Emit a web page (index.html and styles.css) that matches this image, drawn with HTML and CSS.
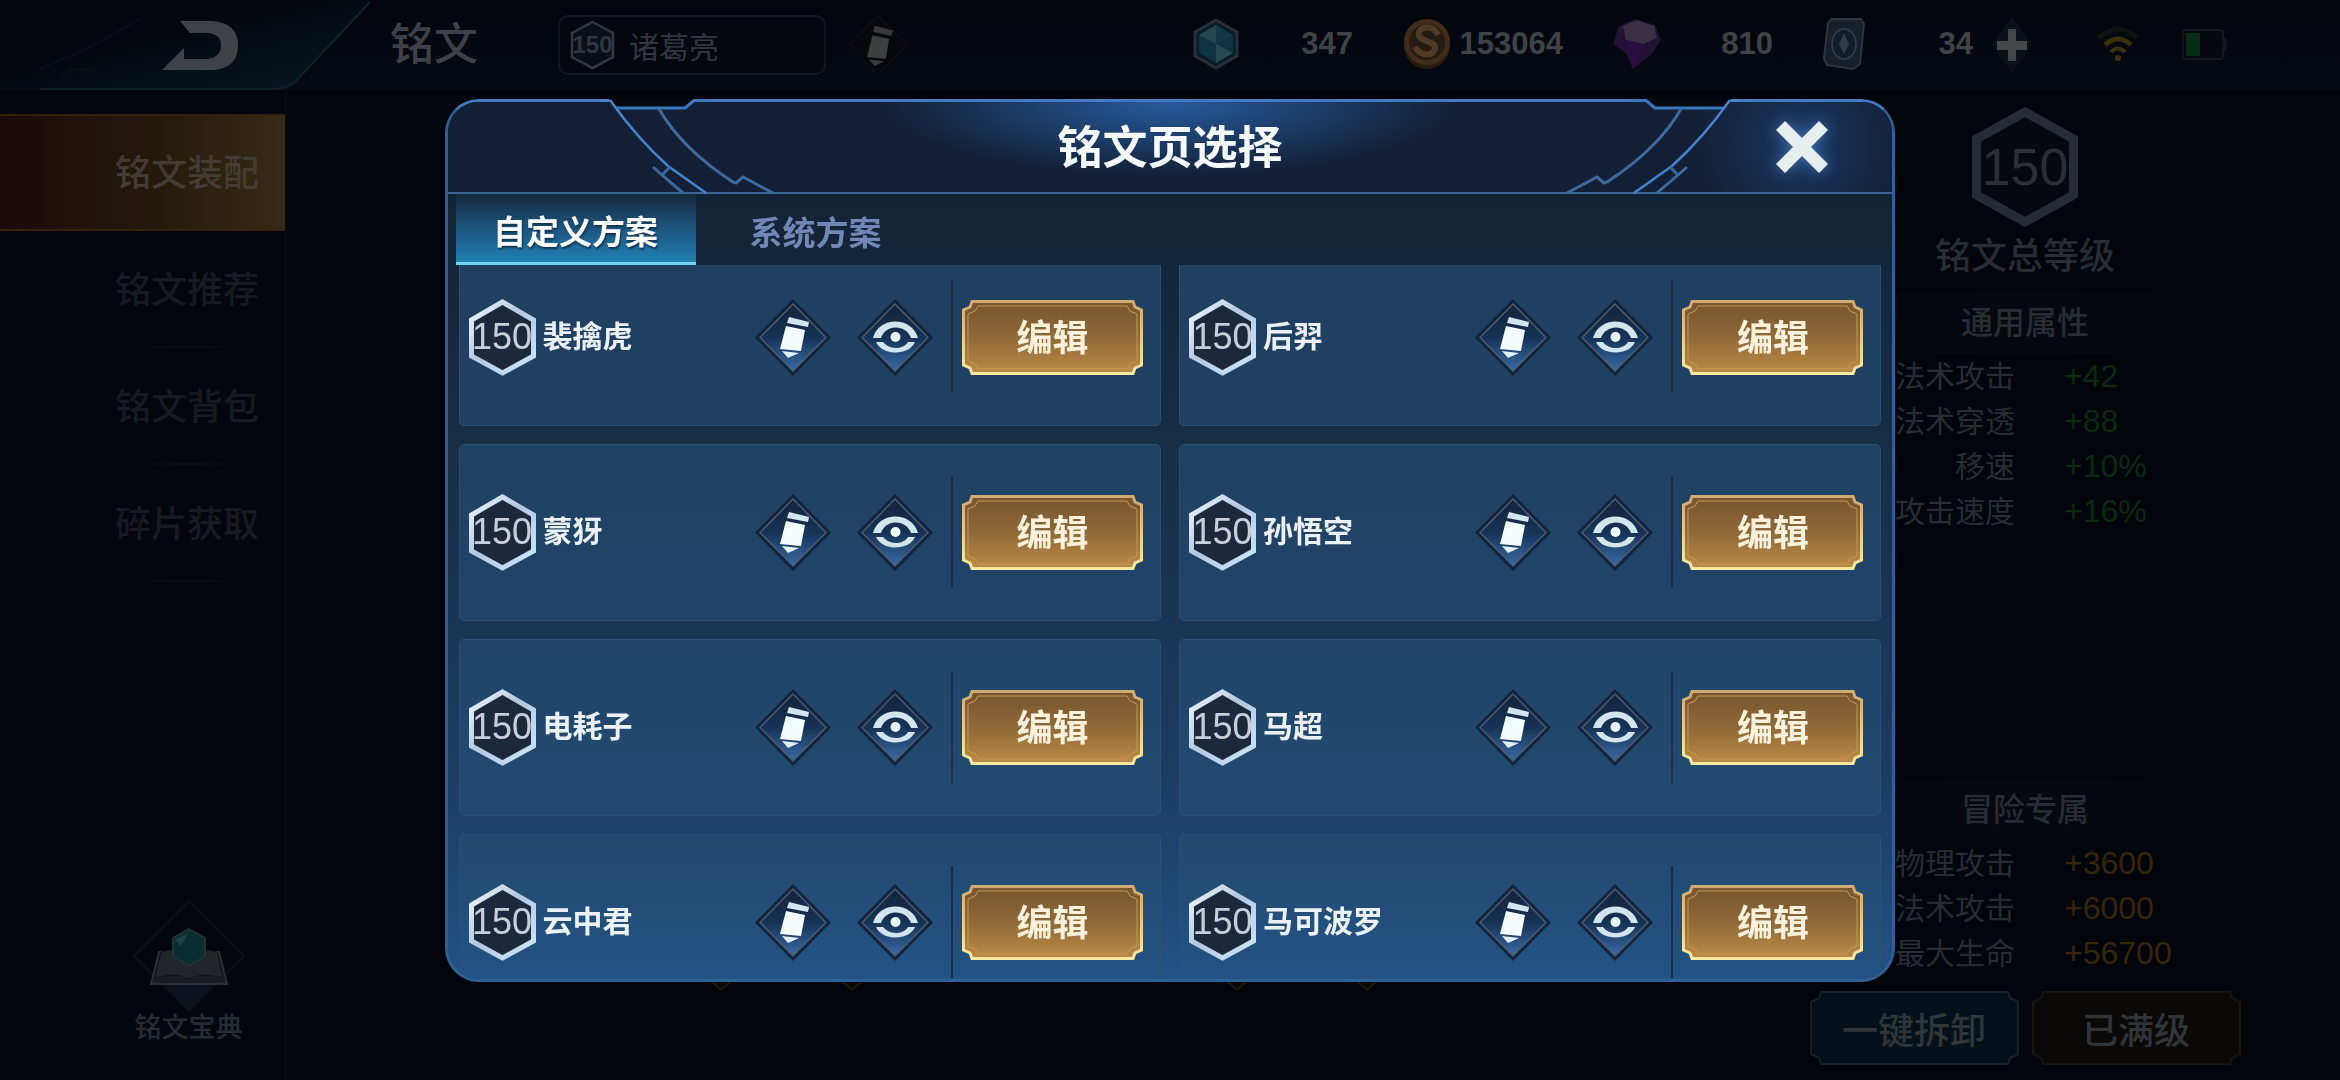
FILE: index.html
```html
<!DOCTYPE html>
<html lang="zh-CN">
<head>
<meta charset="utf-8">
<title>铭文</title>
<link rel="stylesheet" href="styles.css">
</head>
<body>
<svg class="defs" width="0" height="0" aria-hidden="true">
  <defs>
    <linearGradient id="gold" x1="0" y1="0" x2="0" y2="1"><stop offset="0" stop-color="#76542f"/><stop offset=".5" stop-color="#8f6937"/><stop offset="1" stop-color="#bd8b45"/></linearGradient>
    <linearGradient id="goldRim" x1="0" y1="0" x2="0" y2="1"><stop offset="0" stop-color="#d0aa70"/><stop offset="1" stop-color="#fbe9a2"/></linearGradient>
    <linearGradient id="silver" x1="0" y1="0" x2="1" y2="1"><stop offset="0" stop-color="#f2f8ff"/><stop offset=".45" stop-color="#b4c7e0"/><stop offset="1" stop-color="#cbe8ff"/></linearGradient>
    <linearGradient id="gem" x1="0" y1="0" x2="0" y2="1"><stop offset="0" stop-color="#13243a"/><stop offset=".5" stop-color="#163256"/><stop offset="1" stop-color="#3a6ba6"/></linearGradient>
    <linearGradient id="backPlate" x1="0" y1="0" x2="1" y2="1"><stop offset=".4" stop-color="#04070d"/><stop offset="1" stop-color="#071a22"/></linearGradient>
    <symbol id="plate" viewBox="0 0 181 75">
      <path d="M10 1.500H171L173 7L179.500 10V65L173 68L171 73.500H10L8 68L1.500 65V10L8 7Z" fill="url(#gold)" stroke="url(#goldRim)" stroke-width="3"/>
      <path d="M16 6H165L168 11L175 14V61L168 64L165 69H16L13 64L6 61V14L13 11Z" fill="none" stroke="#c79a55" stroke-width="1"/>
    </symbol>
    <symbol id="hex" viewBox="0 0 67 77">
      <path d="M33.500 3L64.500 21V57L33.500 74L2.500 57V21Z" fill="#1c293c" stroke="url(#silver)" stroke-width="5"/>
    </symbol>
    <symbol id="pencil" viewBox="0 0 76 77">
      <path d="M38 0L76 38.500L38 77L0 38.500Z" fill="#12233b"/>
      <path d="M38 5L71 38.500L38 72L5 38.500Z" fill="url(#gem)" stroke="#4c5c72" stroke-width="1.500"/>
      <path d="M34 18L54 23L53 28L32 24Z" fill="#d3e6ee"/>
      <path d="M31 27L50 31L46 52L25 50Z" fill="#f4fcff"/>
      <path d="M27 52L44 54L33 59Z" fill="#e4f2fa"/>
    </symbol>
    <symbol id="eye" viewBox="0 0 76 77">
      <path d="M38 0L76 38.500L38 77L0 38.500Z" fill="#12233b"/>
      <path d="M38 5L71 38.500L38 72L5 38.500Z" fill="url(#gem)" stroke="#4c5c72" stroke-width="1.500"/>
      <path d="M16 39C22 17 55 17 61 39H54C49 25 29 25 24 39Z" fill="#d2e4ec"/>
      <path d="M19 43H26C32 51 46 51 51 43H58C52 57 25 57 19 43Z" fill="#d2e4ec"/>
      <circle cx="38.500" cy="38" r="5" fill="#eefaff"/>
    </symbol>
    <symbol id="trim" viewBox="0 0 190 95">
      <path d="M9 0L15 9H85L95 0Z" fill="#05080e"/>
      <path d="M0 1.500H9" stroke="#4b83c9" stroke-width="3"/>
      <path d="M16 9H85L94 1.500H110" fill="none" stroke="#3c76bd" stroke-width="3"/>
      <path d="M10 1Q36 38 68 67L106 94" fill="none" stroke="#4584cc" stroke-width="2.500"/>
      <path d="M59 10Q82 50 133 83L136 84L143 78L173 94" fill="none" stroke="#3e6aa0" stroke-width="3"/>
      <path d="M53 68L62 76L83 94M62 76L70 68" fill="none" stroke="#38699f" stroke-width="3"/>
    </symbol>
    <symbol id="rim" viewBox="0 0 209 74">
      <path d="M11 1H198L200 7L208 11V63L200 67L198 73H11L9 67L1 63V11L9 7Z"/>
    </symbol>
  </defs>
</svg>

<div class="screen">
  <header class="topbar">
    <button class="back" aria-label="返回">
      <svg width="372" height="92" viewBox="0 0 372 92" aria-hidden="true">
        <path d="M0 0H372L296 82Q288 90 272 90H0Z" fill="url(#backPlate)"/>
        <path d="M370 3L296 82Q288 90 272 90H40" fill="none" stroke="#10212a" stroke-width="2"/>
        <path d="M60 78Q78 62 104 78M40 70Q90 50 140 20" fill="none" stroke="#08101a" stroke-width="2"/>
        <path d="M180 22H212Q238 24 238 46Q238 70 212 71H162L184 49V60H208Q221 58 221 46Q221 35 208 34H190Z" fill="#3f4246"/>
      </svg>
    </button>
    <h1>铭文</h1>
    <button class="current">
      <span class="mini">
        <svg width="45" height="50" viewBox="0 0 45 50" aria-hidden="true"><path d="M22.500 2L43 13V37L22.500 48L2 37V13Z" fill="#0a0e16" stroke="#343941" stroke-width="2.500"/></svg>
        <span>150</span>
      </span>
      <span>诸葛亮</span>
    </button>
    <button class="rename" aria-label="改名">
      <svg width="60" height="64" viewBox="0 0 76 77" aria-hidden="true"><path d="M38 1L75 38.500L38 76L1 38.500Z" fill="#06080e" stroke="#0b1018" stroke-width="2"/><path d="M34 14L57 20L55 27L32 22Z" fill="#36383b"/><path d="M31 26L52 31L48 56L24 54Z" fill="#3e3f41"/><path d="M26 57L46 59L34 65Z" fill="#36383b"/></svg>
    </button>
    <ul class="wallet">
      <li>
        <svg width="46" height="52" viewBox="0 0 46 52" aria-hidden="true"><path d="M23 2L44 14V38L23 50L2 38V14Z" fill="#0b1a24" stroke="#25303b" stroke-width="3"/><path d="M23 7L40 17V35L23 45L6 35V17Z" fill="#0e3341"/><path d="M23 7V26L6 17Z" fill="#24474f"/><path d="M23 26L40 35L23 45Z" fill="#274b54"/><path d="M23 7L40 17L23 26Z" fill="#113844"/></svg>
        <span>347</span>
      </li>
      <li>
        <svg width="48" height="52" viewBox="0 0 48 52" aria-hidden="true"><ellipse cx="24" cy="28" rx="23" ry="23" fill="#2a1b10"/><circle cx="24" cy="24" r="23" fill="#402c18"/><circle cx="24" cy="24" r="18" fill="#251b13"/><path d="M35 17C30 5 14 9 16 17C17 24 34 23 32 31C29 39 17 38 12 29" fill="none" stroke="#503c25" stroke-width="6"/></svg>
        <span>153064</span>
      </li>
      <li>
        <svg width="48" height="52" viewBox="0 0 48 52" aria-hidden="true"><path d="M6 8L22 1L42 7L48 22L38 37L20 51L14 36L0 26Z" fill="#231136"/><path d="M10 8L24 2L41 8L44 20L30 26L13 22Z" fill="#3b2f43"/><path d="M13 22L30 26L20 51L14 36Z" fill="#2b0f40"/></svg>
        <span>810</span>
      </li>
      <li class="short">
        <svg width="42" height="52" viewBox="0 0 42 52" aria-hidden="true"><path d="M9 1H38L41 6L37 46L30 51L4 47L1 41L5 5Z" fill="#171f2a" stroke="#2e3640" stroke-width="2"/><ellipse cx="21" cy="26" rx="12" ry="15" fill="#111c28" stroke="#2b3b4a" stroke-width="2"/><path d="M21 15L26 26L21 36L16 26Z" fill="#303c48"/></svg>
        <span>34</span>
      </li>
    </ul>
    <button class="add" aria-label="增加">
      <svg width="42" height="58" viewBox="0 0 42 58" aria-hidden="true"><path d="M21 1L41 29L21 57L1 29Z" fill="#0a1118"/><path d="M17 13H25V25H36V34H25V45H17V34H6V25H17Z" fill="#44474a"/></svg>
    </button>
    <div class="status">
      <svg width="42" height="36" viewBox="0 0 42 36" aria-label="无线网络"><path d="M2 11Q21 -6 40 11" fill="none" stroke="#0e1310" stroke-width="5"/><path d="M8 18Q21 6 34 18" fill="none" stroke="#3c3108" stroke-width="5"/><path d="M14 25Q21 18 28 25" fill="none" stroke="#3c3108" stroke-width="4"/><circle cx="21" cy="31" r="3" fill="#3c3108"/></svg>
      <svg width="45" height="32" viewBox="0 0 45 32" aria-label="电量"><rect x="1" y="1" width="40" height="29" rx="3" fill="#05080d" stroke="#13171d" stroke-width="2"/><rect x="4" y="4" width="14" height="23" fill="#062d15"/><path d="M43 9V22" stroke="#13171d" stroke-width="3"/></svg>
    </div>
  </header>

  <main class="body">
    <nav class="side">
      <a class="on" href="#equip">铭文装配</a>
      <a href="#recommend">铭文推荐</a>
      <a href="#bag">铭文背包</a>
      <a href="#shards">碎片获取</a>
      <button class="codex">
        <svg width="112" height="112" viewBox="0 0 112 112" aria-hidden="true"><path d="M56 1L111 56L56 111L1 56Z" fill="none" stroke="#0c1017" stroke-width="2"/><path d="M32 85H80L56 110Z" fill="#0b131e"/><path d="M26 52H86L94 84H18Z" fill="#191d23" stroke="#2a2f36" stroke-width="2"/><path d="M28 52Q44 46 56 62Q68 46 84 52L90 78Q68 72 56 79Q44 72 22 78Z" fill="#222529" stroke="#10141a"/><path d="M56 29L72 38V56L56 66L40 56V38Z" fill="#0a2e30" stroke="#243237" stroke-width="2"/><path d="M56 32L48 46L42 40Z" fill="#1f3f42"/></svg>
        <span>铭文宝典</span>
      </button>
    </nav>

    <div class="stage">
      <svg width="690" height="100" viewBox="0 0 690 100" aria-hidden="true"><g fill="#080806" stroke="#1b170c" stroke-width="2"><path d="M1 -8L21 10L41 -8"/><path d="M132 -8L152 10L172 -8"/><path d="M517 -8L537 10L557 -8"/><path d="M647 -8L667 10L687 -8"/></g></svg>
    </div>

    <aside class="info">
      <div class="total">
        <svg width="106" height="120" viewBox="0 0 106 120" aria-hidden="true"><path d="M53 5L101.500 32V88L53 115L4.500 88V32Z" fill="#05080e" stroke="#272b33" stroke-width="9"/></svg>
        <span>150</span>
      </div>
      <p class="total-label">铭文总等级</p>
      <section class="group">
        <h2>通用属性</h2>
        <dl>
          <dt>法术攻击</dt><dd>+42</dd>
          <dt>法术穿透</dt><dd>+88</dd>
          <dt>移速</dt><dd>+10%</dd>
          <dt>攻击速度</dt><dd>+16%</dd>
        </dl>
      </section>
      <section class="group adventure">
        <h2>冒险专属</h2>
        <dl>
          <dt>物理攻击</dt><dd>+3600</dd>
          <dt>法术攻击</dt><dd>+6000</dd>
          <dt>最大生命</dt><dd>+56700</dd>
        </dl>
      </section>
      <div class="actions">
        <button class="act teal"><svg aria-hidden="true"><use href="#rim"/></svg><span>一键拆卸</span></button>
        <button class="act brown"><svg aria-hidden="true"><use href="#rim"/></svg><span>已满级</span></button>
      </div>
    </aside>
  </main>
</div>

<div class="overlay">
  <section class="modal" role="dialog" aria-labelledby="pick">
    <svg class="trim left" width="190" height="95" aria-hidden="true"><use href="#trim"/></svg>
    <svg class="trim right" width="190" height="95" aria-hidden="true"><use href="#trim"/></svg>
    <header class="modal-head">
      <h2 id="pick">铭文页选择</h2>
      <button class="close" aria-label="关闭">
        <svg width="54" height="54" viewBox="0 0 54 54" aria-hidden="true"><path d="M10 1L27 18L44 1L53 10L36 27L53 44L44 53L27 36L10 53L1 44L18 27L1 10Z" fill="#e6efed"/></svg>
      </button>
    </header>
    <div class="tabs" role="tablist">
      <button class="tab on" role="tab" aria-selected="true">自定义方案</button>
      <button class="tab" role="tab" aria-selected="false">系统方案</button>
    </div>
    <div class="list">
      <ul class="cards">
        <li class="card">
          <span class="level"><svg aria-hidden="true"><use href="#hex"/></svg><span>150</span></span><span class="name">裴擒虎</span>
          <button class="icon" aria-label="改名"><svg><use href="#pencil"/></svg></button><button class="icon" aria-label="查看"><svg><use href="#eye"/></svg></button>
          <div class="cta"><button class="edit"><svg aria-hidden="true"><use href="#plate"/></svg><span>编辑</span></button></div>
        </li>
        <li class="card">
          <span class="level"><svg aria-hidden="true"><use href="#hex"/></svg><span>150</span></span><span class="name">后羿</span>
          <button class="icon" aria-label="改名"><svg><use href="#pencil"/></svg></button><button class="icon" aria-label="查看"><svg><use href="#eye"/></svg></button>
          <div class="cta"><button class="edit"><svg aria-hidden="true"><use href="#plate"/></svg><span>编辑</span></button></div>
        </li>
        <li class="card">
          <span class="level"><svg aria-hidden="true"><use href="#hex"/></svg><span>150</span></span><span class="name">蒙犽</span>
          <button class="icon" aria-label="改名"><svg><use href="#pencil"/></svg></button><button class="icon" aria-label="查看"><svg><use href="#eye"/></svg></button>
          <div class="cta"><button class="edit"><svg aria-hidden="true"><use href="#plate"/></svg><span>编辑</span></button></div>
        </li>
        <li class="card">
          <span class="level"><svg aria-hidden="true"><use href="#hex"/></svg><span>150</span></span><span class="name">孙悟空</span>
          <button class="icon" aria-label="改名"><svg><use href="#pencil"/></svg></button><button class="icon" aria-label="查看"><svg><use href="#eye"/></svg></button>
          <div class="cta"><button class="edit"><svg aria-hidden="true"><use href="#plate"/></svg><span>编辑</span></button></div>
        </li>
        <li class="card">
          <span class="level"><svg aria-hidden="true"><use href="#hex"/></svg><span>150</span></span><span class="name">电耗子</span>
          <button class="icon" aria-label="改名"><svg><use href="#pencil"/></svg></button><button class="icon" aria-label="查看"><svg><use href="#eye"/></svg></button>
          <div class="cta"><button class="edit"><svg aria-hidden="true"><use href="#plate"/></svg><span>编辑</span></button></div>
        </li>
        <li class="card">
          <span class="level"><svg aria-hidden="true"><use href="#hex"/></svg><span>150</span></span><span class="name">马超</span>
          <button class="icon" aria-label="改名"><svg><use href="#pencil"/></svg></button><button class="icon" aria-label="查看"><svg><use href="#eye"/></svg></button>
          <div class="cta"><button class="edit"><svg aria-hidden="true"><use href="#plate"/></svg><span>编辑</span></button></div>
        </li>
        <li class="card">
          <span class="level"><svg aria-hidden="true"><use href="#hex"/></svg><span>150</span></span><span class="name">云中君</span>
          <button class="icon" aria-label="改名"><svg><use href="#pencil"/></svg></button><button class="icon" aria-label="查看"><svg><use href="#eye"/></svg></button>
          <div class="cta"><button class="edit"><svg aria-hidden="true"><use href="#plate"/></svg><span>编辑</span></button></div>
        </li>
        <li class="card">
          <span class="level"><svg aria-hidden="true"><use href="#hex"/></svg><span>150</span></span><span class="name">马可波罗</span>
          <button class="icon" aria-label="改名"><svg><use href="#pencil"/></svg></button><button class="icon" aria-label="查看"><svg><use href="#eye"/></svg></button>
          <div class="cta"><button class="edit"><svg aria-hidden="true"><use href="#plate"/></svg><span>编辑</span></button></div>
        </li>
      </ul>
    </div>
  </section>
</div>
</body>
</html>
```

FILE: styles.css
```css
* { box-sizing: border-box; margin: 0; padding: 0; }

body {
  background: #02050b;
  color: #282c33;
  font-family: "Liberation Sans", "Noto Sans CJK SC", sans-serif;
  font-size: 30px;
  overflow: hidden;
}

button { background: none; border: 0; color: inherit; font: inherit; cursor: pointer; }
ul { list-style: none; }
a { color: inherit; text-decoration: none; }
svg { display: block; flex: none; }
.defs { position: absolute; }

.screen { display: flex; flex-direction: column; height: 100vh; }

/* top bar */
.topbar {
  display: flex;
  align-items: center;
  height: 92px;
  flex: none;
  padding-right: 113px;
  background: linear-gradient(#02050b, #060a14);
  border-bottom: 2px solid #030508;
}
.topbar h1 { margin-left: 18px; font-size: 44px; line-height: 60px; font-weight: 500; color: #3e4148; }
.current {
  display: flex;
  align-items: center;
  gap: 14px;
  width: 268px;
  height: 60px;
  margin-left: 80px;
  padding-left: 10px;
  border: 2px solid #111721;
  border-radius: 10px;
  background: #04070d;
  color: #32363e;
}
.mini, .level, .total, .act, .edit { display: grid; place-items: center; flex: none; }
.mini > *, .level > *, .total > *, .act > *, .edit > * { grid-area: 1 / 1; }
.mini span { font-size: 24px; font-weight: 700; }
.rename { margin-left: 22px; }
.wallet { display: flex; gap: 50px; margin-left: auto; font-size: 31px; font-weight: 700; color: #404346; }
.wallet li { display: flex; align-items: center; justify-content: space-between; width: 160px; }
.wallet .short { width: 150px; }
.wallet span, .wallet svg { margin-bottom: 3px; }
.add { margin-left: 18px; }
.status { display: flex; align-items: center; gap: 43px; margin-left: 64px; }

/* page body */
.body { display: flex; flex: 1; min-height: 0; }
.side {
  display: flex;
  flex-direction: column;
  width: 287px;
  padding-top: 22px;
  border-right: 2px solid #060b10;
  background: #03070d;
}
.side a {
  height: 117px;
  padding: 2px 26px 0 0;
  font-size: 36px;
  font-weight: 500;
  line-height: 115px;
  text-align: right;
  color: #171b21;
  background: linear-gradient(90deg, transparent, #0a0f15, transparent) 122px 100% / 130px 2px no-repeat;
}
.side a.on {
  padding-top: 0;
  color: #433c35;
  background: linear-gradient(90deg, #190b0a, #241a0b 55%, #362b16);
  border-top: 2px solid #30200c;
  border-bottom: 2px solid #33230d;
}
.codex {
  display: flex;
  flex-direction: column;
  align-items: center;
  margin: auto 0 36px 92px;
  font-size: 27px;
  line-height: 32px;
  font-weight: 500;
}
.stage { display: flex; flex: 1; align-items: flex-end; justify-content: center; }

/* attributes */
.info {
  display: flex;
  flex-direction: column;
  align-items: center;
  width: 537px;
  padding: 15px 93px 15px 0;
}
.total span { font-size: 52px; color: #2a2e35; }
.total-label { margin-top: 9px; font-size: 36px; line-height: 42px; font-weight: 500; }
.group { width: 100%; margin-top: 14px; }
.group h2 {
  height: 62px;
  font-size: 32px;
  line-height: 62px;
  font-weight: 500;
  text-align: center;
  background: linear-gradient(90deg, transparent, #05080f 40%, #05080f 60%, transparent);
}
.group dl { display: grid; grid-template-columns: 212px 1fr; column-gap: 49px; line-height: 45px; }
.group dt { text-align: right; }
.group dd { font-size: 32px; color: #0b2a10; }
.adventure { margin-top: auto; }
.group.adventure dd { color: #37260b; }
.actions { display: flex; gap: 13px; margin-top: 15px; }
.act { width: 209px; height: 74px; font-size: 36px; font-weight: 500; color: #303539; }
.act svg { width: 209px; height: 74px; stroke-width: 2; }
.teal svg { fill: #04111a; stroke: #10232b; }
.brown svg { fill: #0a0908; stroke: #17150e; }

/* dialog */
.overlay { position: fixed; inset: 0; display: grid; place-items: center; }
.modal {
  position: relative;
  display: flex;
  flex-direction: column;
  width: 62vw;
  height: calc(100vh - 197px);
  border: 3px solid #2f6196;
  border-top-color: #427bc2;
  border-radius: 34px;
  background: linear-gradient(#121f33, #132537 15%, #183049 45%, #1b3b5f 75%, #235285);
}
.trim { position: absolute; top: -3px; }
.trim.left { left: 152px; }
.trim.right { right: 152px; transform: scaleX(-1); }
.modal-head {
  display: grid;
  grid-template-columns: 1fr auto 1fr;
  align-items: center;
  height: 92px;
  flex: none;
  border-bottom: 2px solid #3a668f;
  border-radius: 30px 30px 0 0;
  background:
    radial-gradient(ellipse 290px 75px at 50% 0, #265c9f, transparent),
    radial-gradient(circle 110px at calc(100% - 90px) 40px, #1b3761, transparent),
    #121f34;
}
.modal-head h2 { grid-column: 2; padding-top: 4px; font-size: 45px; line-height: 60px; font-weight: 700; color: #f6f9fb; }
.close { justify-self: end; margin-right: 63px; filter: drop-shadow(0 0 8px #3f74b8); }
.tabs { display: flex; flex: none; height: 71px; padding-left: 8px; }
.tab { width: 240px; padding-top: 4px; font-size: 33px; font-weight: 700; color: #7188b7; }
.tab.on {
  color: #fff;
  background: linear-gradient(#14283a, #1c5078 45%, #2180b4);
  border-bottom: 3px solid #72d3f2;
  text-shadow: 1px 2px 2px #123550;
}
.list {
  --scrolled: 16px;
  flex: 1;
  min-height: 0;
  overflow: hidden;
  padding: 0 11px;
  border-radius: 0 0 30px 30px;
}
.cards {
  display: grid;
  grid-template-columns: 1fr 1fr;
  gap: 18px;
  margin-top: calc(-1 * var(--scrolled));
}
.card {
  display: flex;
  align-items: center;
  height: 177px;
  padding: 0 17px 0 9px;
  border: 1px solid #285078;
  border-radius: 5px;
  background: #1f4061;
}
.card:nth-child(n+3) { background: linear-gradient(#1f4163, #204469); }
.card:nth-child(n+5) { background: linear-gradient(#21456a, #224a70); }
.card:nth-child(n+7) { background: linear-gradient(#24496d, #22558a); }
.level { font-size: 36px; color: #c9cfda; }
.level svg { width: 67px; height: 77px; }
.name { flex: 1; padding-left: 7px; font-weight: 700; line-height: 40px; color: #eaf0f3; white-space: nowrap; }
.icon svg { width: 76px; height: 77px; }
.icon + .icon { margin-left: 26px; }
.cta {
  display: flex;
  align-items: center;
  height: 112px;
  margin-left: 18px;
  padding-left: 9px;
  border-left: 2px solid #152e4b;
}
.edit { font-size: 36px; font-weight: 700; color: #fcf1dc; }
.edit span { padding-bottom: 4px; }
.edit svg { width: 181px; height: 75px; }
```
